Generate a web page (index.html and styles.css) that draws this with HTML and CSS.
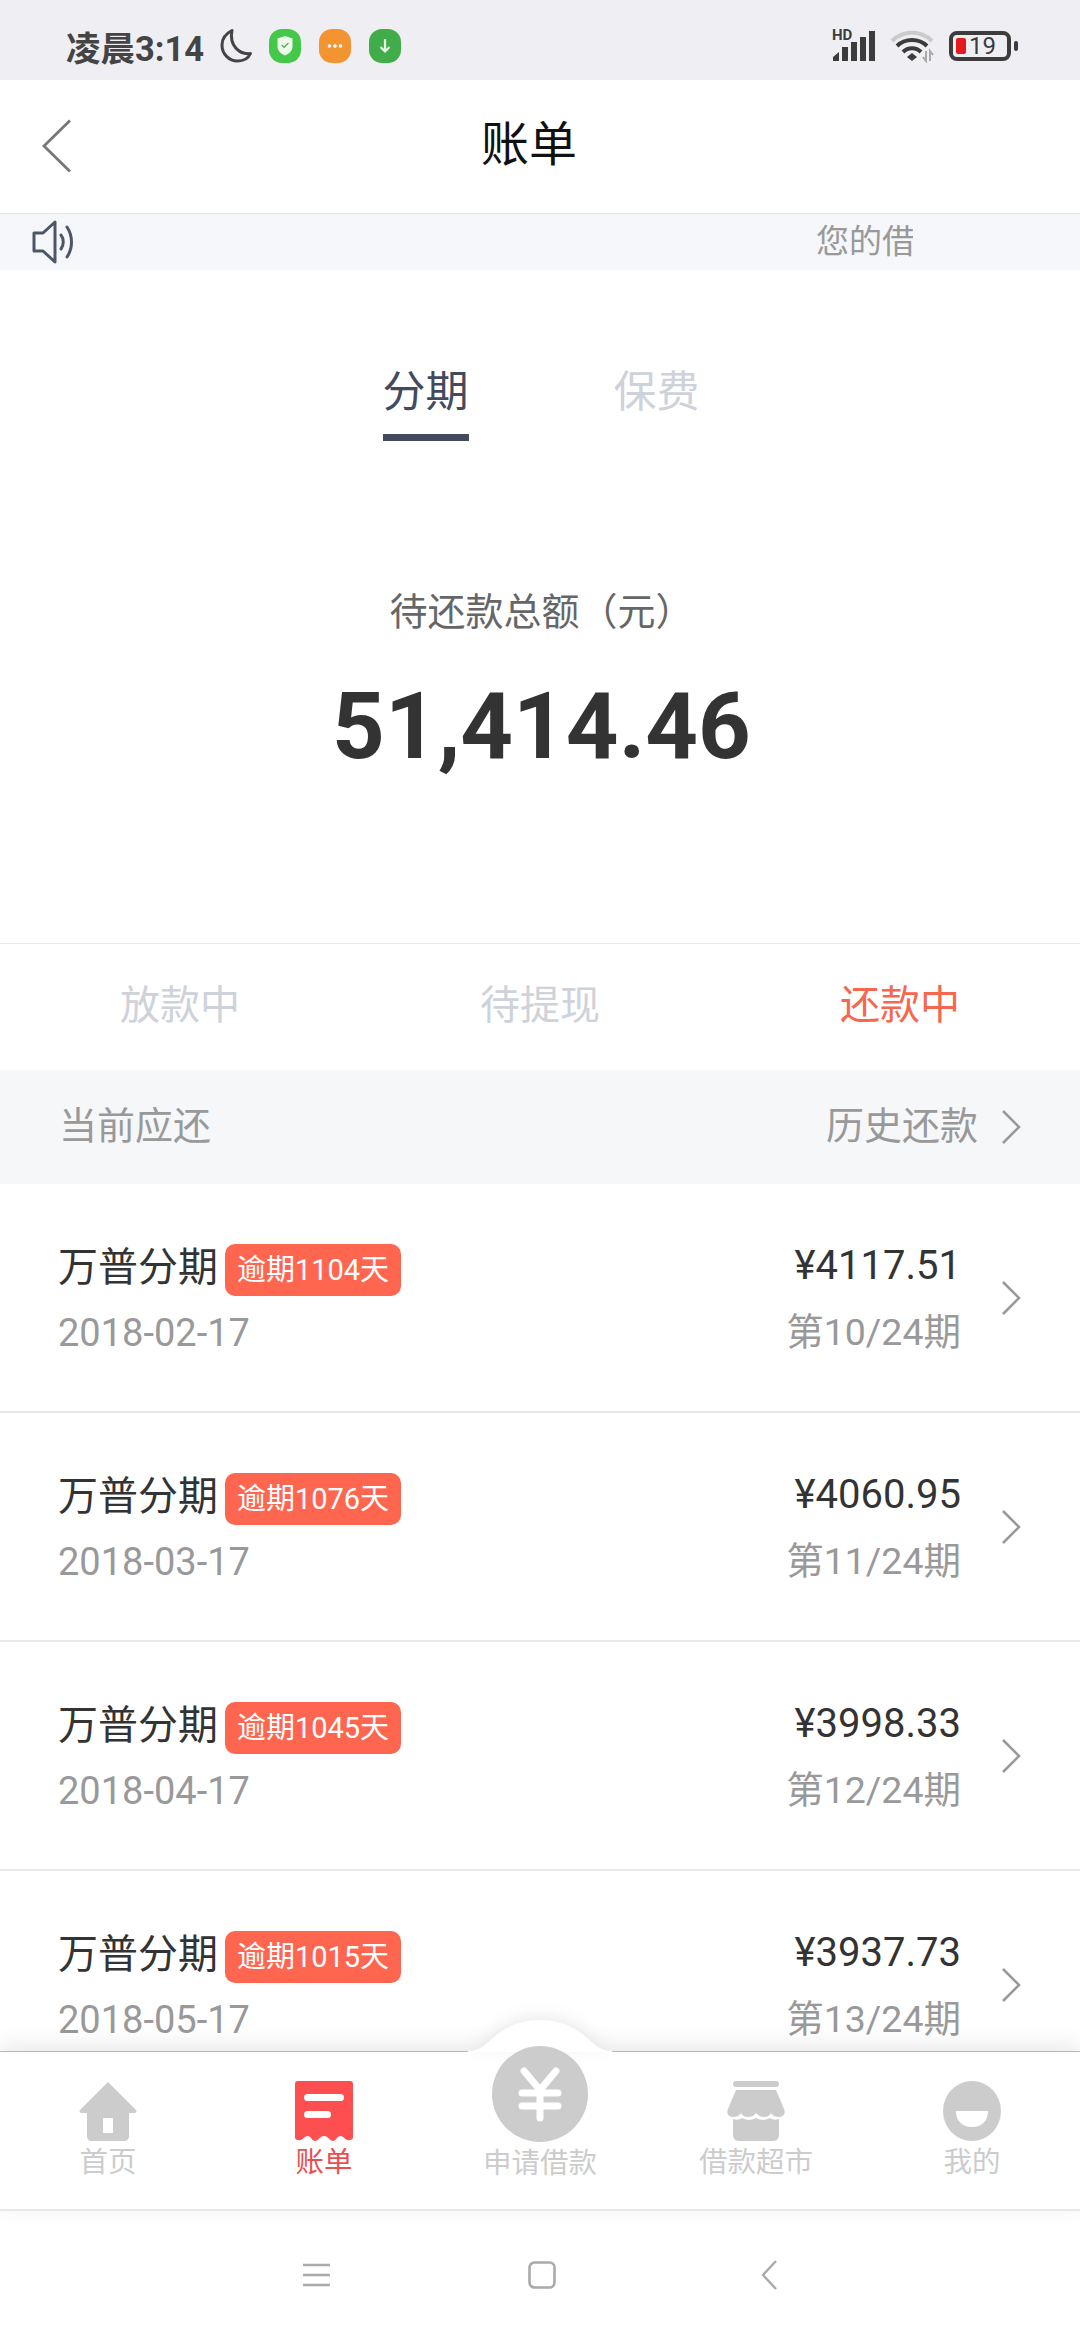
FILE: index.html
```html
<!DOCTYPE html>
<html lang="zh-CN">
<head>
<meta charset="utf-8">
<title>账单</title>
<link rel="stylesheet" href="styles.css">
</head>
<body>
<div class="app">
  <header class="status">
    <span class="clock">凌晨3:14</span>
    <svg class="moon" viewBox="0 0 34 36"><path d="M13 2.500C8 5 3 9.500 3 17c0 9 7 16 15.500 16 6 0 11-3 13-7.500C20 27 10 17 13 2.500z" fill="none" stroke="#444" stroke-width="3" stroke-linejoin="round"/></svg>
    <svg class="note" viewBox="0 0 32 34"><rect width="32" height="34" rx="13" fill="#45c74a"/><path d="M16 7l7.500 2.600v8c0 4.400-3.400 7.200-7.500 9-4.100-1.800-7.500-4.600-7.500-9v-8z" fill="#eafbe8"/><path d="M12.800 16l2.300 2.300 4.300-4.300" fill="none" stroke="#5aa060" stroke-width="1.200"/></svg>
    <svg class="note" viewBox="0 0 32 34"><rect width="32" height="34" rx="13" fill="#f29431"/><circle cx="10.500" cy="17" r="1.800" fill="#fff"/><circle cx="16" cy="17" r="1.800" fill="#fff"/><circle cx="21.500" cy="17" r="1.800" fill="#fff"/></svg>
    <svg class="note" viewBox="0 0 32 34"><rect width="32" height="34" rx="13" fill="#41ad4a"/><path d="M16 10v12M11.500 18l4.500 4.500 4.500-4.500" fill="none" stroke="#e6f7e4" stroke-width="2.200"/></svg>
    <span class="status-gap"></span>
    <div class="signal">
      <span class="hd">HD</span>
      <svg viewBox="0 0 42 30"><path d="M1 30v-4l6-5v9zM10 30V16h6v14zM19 30V11h6v19zM28 30V6h6v24z" fill="#3c3c3c" transform="translate(-1 0)"/><rect x="36" y="0" width="6" height="30" fill="#3c3c3c"/></svg>
    </div>
    <svg class="wifi" viewBox="0 0 44 34"><path d="M2 12C13 1 31 1 42 12" fill="none" stroke="#cbcbcb" stroke-width="4"/><path d="M7 17C15 9 29 9 37 17" fill="none" stroke="#3c3c3c" stroke-width="4"/><path d="M13 23c5-5 13-5 18 0" fill="none" stroke="#3c3c3c" stroke-width="4"/><path d="M17 28l5-4 5 4-5 4z" fill="#3c3c3c"/><path d="M36 22v10l-3-4M40 32V22l3 4" fill="none" stroke="#aaa" stroke-width="2"/></svg>
    <div class="battery">
      <div class="battery-shell"><span class="battery-fill"></span><span class="battery-num">19</span></div>
      <span class="battery-cap"></span>
    </div>
  </header>

  <nav class="topbar">
    <svg class="back" viewBox="0 0 30 54"><path d="M28 1.500L2 27l26 25.500" fill="none" stroke="#777" stroke-width="2.800"/></svg>
    <h1 class="title">账单</h1>
  </nav>

  <div class="notice">
    <svg class="speaker" viewBox="0 0 44 46"><path d="M2 14h9L23 3v40L11 32H2z" fill="none" stroke="#4d5669" stroke-width="3" stroke-linejoin="round"/><path d="M29 16c3 4 3 10 0 14M35 8c6 9 6 21 0 30" fill="none" stroke="#4d5669" stroke-width="3" stroke-linecap="round"/></svg>
    <div class="marquee">您的借</div>
  </div>

  <main class="content">
    <div class="tabs">
      <div class="tab tab-on">分期</div>
      <div class="tab">保费</div>
    </div>
    <div class="total">
      <div class="total-label">待还款总额（元）</div>
      <div class="total-num">51,414.46</div>
    </div>
    <div class="states">
      <div class="state">放款中</div>
      <div class="state">待提现</div>
      <div class="state state-on">还款中</div>
    </div>
    <div class="section">
      <span>当前应还</span>
      <span class="history">历史还款
        <svg class="chev" viewBox="0 0 20 36"><path d="M2 2l16 16L2 34" fill="none" stroke="#999" stroke-width="2.600"/></svg>
      </span>
    </div>
    <ul class="bills">
      <li class="bill">
        <div class="bill-left">
          <div class="bill-head"><span class="bill-name">万普分期</span><span class="badge">逾期1104天</span></div>
          <div class="bill-date">2018-02-17</div>
        </div>
        <div class="bill-right">
          <div class="bill-amount">¥4117.51</div>
          <div class="bill-term">第10/24期</div>
        </div>
        <svg class="chev" viewBox="0 0 20 36"><path d="M2 2l16 16L2 34" fill="none" stroke="#999" stroke-width="2.600"/></svg>
      </li>
      <li class="bill">
        <div class="bill-left">
          <div class="bill-head"><span class="bill-name">万普分期</span><span class="badge">逾期1076天</span></div>
          <div class="bill-date">2018-03-17</div>
        </div>
        <div class="bill-right">
          <div class="bill-amount">¥4060.95</div>
          <div class="bill-term">第11/24期</div>
        </div>
        <svg class="chev" viewBox="0 0 20 36"><path d="M2 2l16 16L2 34" fill="none" stroke="#999" stroke-width="2.600"/></svg>
      </li>
      <li class="bill">
        <div class="bill-left">
          <div class="bill-head"><span class="bill-name">万普分期</span><span class="badge">逾期1045天</span></div>
          <div class="bill-date">2018-04-17</div>
        </div>
        <div class="bill-right">
          <div class="bill-amount">¥3998.33</div>
          <div class="bill-term">第12/24期</div>
        </div>
        <svg class="chev" viewBox="0 0 20 36"><path d="M2 2l16 16L2 34" fill="none" stroke="#999" stroke-width="2.600"/></svg>
      </li>
      <li class="bill">
        <div class="bill-left">
          <div class="bill-head"><span class="bill-name">万普分期</span><span class="badge">逾期1015天</span></div>
          <div class="bill-date">2018-05-17</div>
        </div>
        <div class="bill-right">
          <div class="bill-amount">¥3937.73</div>
          <div class="bill-term">第13/24期</div>
        </div>
        <svg class="chev" viewBox="0 0 20 36"><path d="M2 2l16 16L2 34" fill="none" stroke="#999" stroke-width="2.600"/></svg>
      </li>
    </ul>
  </main>

  <footer class="tabbar">
    <svg class="bump" viewBox="0 0 144 32"><path d="M0 31C12 31 18 24 26 17 40 5 55 0 72 0s32 5 46 17c8 7 14 14 26 14v1H0z" fill="#fff"/></svg>
    <div class="dock">
      <div class="dock-item">
        <svg class="dock-icon" viewBox="0 0 58 60"><path d="M29 1L57 29c1 1.500.5 3-1.500 3H50v23c0 3-2 5-5 5H13c-3 0-5-2-5-5V32H2.500C.5 32 0 30.500 1 29z" fill="#ccc"/><rect x="24" y="37" width="10" height="15" fill="#fff"/></svg>
        <span>首页</span>
      </div>
      <div class="dock-item dock-on">
        <svg class="dock-icon" viewBox="0 0 58 60"><path d="M3 0h52a3 3 0 0 1 3 3v54a3 3 0 0 1-3 2c-5 1-6-4-9.500-4S41 60 38 60s-5-5-9-5-6 5-9 5-4-5-7.500-5S8 60 3 59a3 3 0 0 1-3-2V3a3 3 0 0 1 3-3z" fill="#fd4f50"/><rect x="9" y="13" width="40" height="7" rx="3.500" fill="#fff"/><rect x="9" y="30" width="27" height="7" rx="3.500" fill="#fff"/></svg>
        <span>账单</span>
      </div>
      <div class="dock-item dock-main">
        <svg class="dock-coin" viewBox="0 0 96 96"><circle cx="48" cy="48" r="48" fill="#ccc"/><path d="M32 25l16 19 16-19M30 47h36M30 60h36M48 44v28" fill="none" stroke="#fff" stroke-width="7" stroke-linecap="round" stroke-linejoin="round"/></svg>
        <span>申请借款</span>
      </div>
      <div class="dock-item">
        <svg class="dock-icon" viewBox="0 0 58 60"><rect x="6" y="0" width="46" height="6" rx="3" fill="#ccc"/><path d="M9 9h40l8 19c2 5-1 8-5 8-3 0-6-1-8-4-2 3-4 4-7 4s-5-1-8-4c-2 3-5 4-8 4s-5-1-7-4c-2 3-5 4-8 4-4 0-7-3-5-8z" fill="#ccc"/><path d="M6 38c3 1 6 1 9-1 3 2 9 3 14 0 5 3 11 2 14 0 3 2 6 2 9 1v16c0 3-2 6-6 6H12c-4 0-6-3-6-6z" fill="#ccc"/></svg>
        <span>借款超市</span>
      </div>
      <div class="dock-item">
        <svg class="dock-icon" viewBox="0 0 58 60"><ellipse cx="29" cy="30" rx="29" ry="30" fill="#ccc"/><path d="M13 30h32c0 10-6 16-16 16S13 40 13 30z" fill="#fff"/></svg>
        <span>我的</span>
      </div>
    </div>
  </footer>

  <div class="sysnav">
    <svg class="sys-menu" viewBox="0 0 28 24"><path d="M0 2h27M0 12h27M0 22h27" stroke="#aaa" stroke-width="2.400"/></svg>
    <svg class="sys-home" viewBox="0 0 28 28"><rect x="1.500" y="1.500" width="25" height="25" rx="5" fill="none" stroke="#aaa" stroke-width="2.600"/></svg>
    <svg class="sys-back" viewBox="0 0 16 30"><path d="M15 1L2 15l13 14" fill="none" stroke="#aaa" stroke-width="2.400"/></svg>
  </div>
</div>
</body>
</html>
```

FILE: styles.css
```css
* { box-sizing: border-box; }
html, body { margin: 0; padding: 0; background: #fff; }
body { font-family: Roboto, "Noto Sans CJK SC", sans-serif; color: #333; }
.app { width: 1080px; height: 2340px; display: flex; flex-direction: column; overflow: hidden; }

.status { height: 80px; flex: none; background: #efeff3; display: flex; align-items: center; padding: 12px 62px 0 66px; }
.clock { font-size: 34.500px; font-weight: 700; color: #444; width: 153px; white-space: nowrap; }
.moon { width: 34px; height: 36px; margin-right: 16px; }
.note { width: 32px; height: 34px; margin-right: 18px; }
.status-gap { flex: 1; }
.signal { position: relative; width: 42px; height: 30px; margin-right: 15px; }
.signal svg { width: 42px; height: 30px; display: block; }
.hd { position: absolute; left: -1px; top: -3px; font-size: 15px; line-height: 15px; font-weight: 700; color: #3c3c3c; }
.wifi { width: 44px; height: 34px; margin-right: 15px; }
.battery { display: flex; align-items: center; gap: 3px; }
.battery-shell { width: 62px; height: 30px; border: 4px solid #3c3c3c; border-radius: 8px; display: flex; align-items: center; padding-left: 3px; gap: 3px; }
.battery-fill { width: 10px; height: 16px; background: #e5191c; border-radius: 2px; }
.battery-num { font-size: 24px; line-height: 22px; color: #3c3c3c; }
.battery-cap { width: 4px; height: 10px; background: #3c3c3c; border-radius: 2px; }

.topbar { height: 134px; flex: none; background: #fff; display: grid; grid-template-columns: 1fr auto 1fr; align-items: center; padding: 0 22px 0 0; border-bottom: 1px solid #e6e6e9; }
.back { width: 30px; height: 54px; margin-left: 42px; margin-top: -2px; }
.title { grid-column: 2; margin: -4px 0 0; font-size: 48px; font-weight: 400; color: #111; line-height: 1; }

.notice { height: 56px; flex: none; background: #f6f7fa; display: flex; align-items: center; padding-left: 32px; }
.speaker { width: 44px; height: 46px; }
.marquee { margin-left: 740px; margin-top: -6px; width: 97px; overflow: hidden; white-space: nowrap; font-size: 33px; color: #999; }

.content { flex: 1; min-height: 0; overflow: hidden; display: flex; flex-direction: column; }

.tabs { flex: none; display: flex; justify-content: center; gap: 145px; padding-top: 92px; padding-left: 2px; height: 172px; }
.tab { font-size: 43px; line-height: 60px; height: 72px; color: #ced2da; padding: 0; width: 86px; text-align: center; }
.tab-on { color: #434a5e; border-bottom: 7px solid #434a5e; height: 85px; margin-top: -6px; padding-top: 6px; }

.total { flex: none; height: 502px; text-align: center; padding-top: 145px; padding-left: 3px; border-bottom: 1px solid #eaeaec; }
.total-label { font-size: 38px; line-height: 50px; color: #666; }
.total-num { font-size: 92px; line-height: 110px; font-weight: 700; color: #333; margin-top: 35px; }

.states { flex: none; height: 126px; display: grid; grid-template-columns: repeat(3, 1fr); align-items: center; text-align: center; font-size: 40px; color: #ced2da; padding-bottom: 10px; }
.state-on { color: #f5674f; }

.section { flex: none; height: 114px; background: #f6f7f9; display: flex; align-items: center; justify-content: space-between; padding: 0 59px 10px 59px; font-size: 38px; color: #999; }
.history { display: flex; align-items: center; gap: 23px; }
.section .chev { margin-top: 10px; }
.chev { width: 20px; height: 36px; flex: none; }

.bills { list-style: none; margin: 0; padding: 0; }
.bill { height: 229px; display: flex; align-items: center; padding: 0 59px 0 58px; border-bottom: 2px solid #e9e9eb; }
.bill-left { flex: 1; }
.bill-head { display: flex; align-items: center; height: 52px; }
.bill-name { font-size: 40px; color: #333; margin-top: -2px; }
.badge { margin-left: 7px; margin-top: 10px; height: 52px; width: 176px; background: #ff6650; color: #fff; border-radius: 10px; font-size: 29px; line-height: 52px; text-align: center; }
.bill-date { font-size: 38px; line-height: 46px; color: #999; margin-top: 19px; }
.bill-right { text-align: right; margin-right: 40px; }
.bill-amount { font-size: 40px; line-height: 52px; color: #333; }
.bill-term { font-size: 37.500px; line-height: 46px; color: #999; margin-top: 17px; }

.tabbar { flex: none; height: 160px; position: relative; background: #fff; border-top: 1px solid #b8b8b8; border-bottom: 2px solid #e8e8e8; box-shadow: 0 -6px 22px rgba(0,0,0,.09); }
.bump { position: absolute; left: 468px; top: -32px; width: 144px; height: 32px; filter: drop-shadow(0 -4px 8px rgba(0,0,0,.08)); }
.dock { display: grid; grid-template-columns: repeat(5, 216px); position: relative; }
.dock-item { display: flex; flex-direction: column; align-items: center; font-size: 28.500px; line-height: 36px; color: #ccc; padding-top: 29px; }
.dock-icon { width: 58px; height: 60px; display: block; margin-bottom: 4px; }
.dock-on { color: #e85050; }
.dock-main { padding-top: 0; }
.dock-coin { width: 96px; height: 96px; display: block; margin-top: -6px; margin-bottom: 4px; }

.sysnav { flex: none; height: 129px; background: #fff; display: grid; grid-template-columns: 331px 216px 228px; align-items: center; justify-items: end; padding-bottom: 2px; }
.sys-menu { width: 28px; height: 24px; }
.sys-home { width: 28px; height: 28px; margin-right: -9px; }
.sys-back { width: 16px; height: 30px; margin-right: -2px; }
```
